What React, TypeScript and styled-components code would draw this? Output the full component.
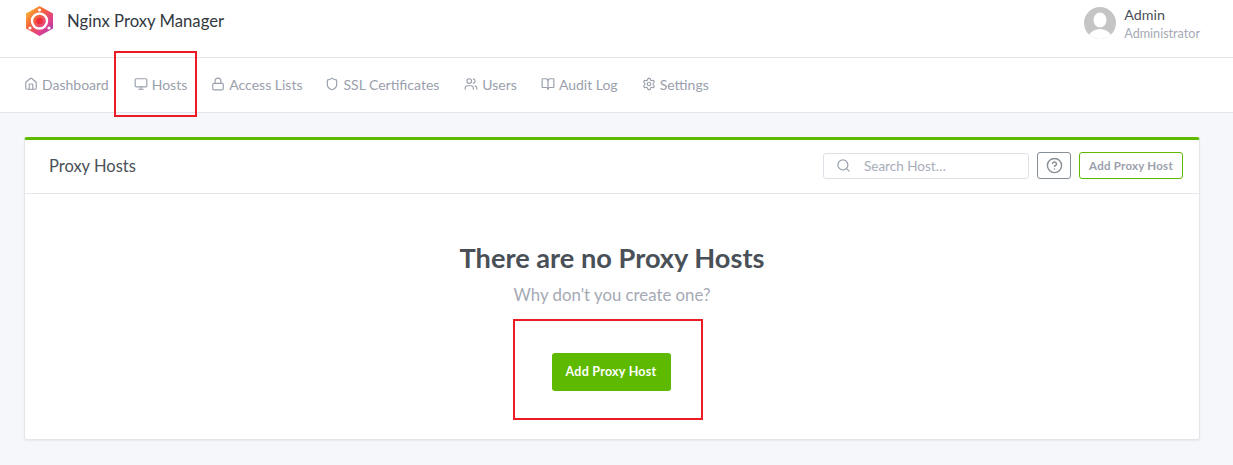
import React from 'react'
import styled, { createGlobalStyle } from 'styled-components'
import { Home, Monitor, Lock, Shield, Users, BookOpen, Settings, Search, HelpCircle } from 'lucide-react'

const GlobalStyle = createGlobalStyle`
  html, body {
    margin: 0;
    padding: 0;
    background: #f5f7fb;
    font-family: "Lato", "Liberation Sans", sans-serif;
    color: #495057;
  }
  * { box-sizing: border-box; }
`

const Page = styled.div`
  position: relative;
  width: 1233px;
  height: 465px;
  overflow: hidden;
`

const Header = styled.header`
  height: 58px;
  background: #fff;
  border-bottom: 1px solid #e4e6ec;
  display: flex;
  align-items: center;
  justify-content: space-between;
  padding: 0 33px 15px 24px;
`

const Brand = styled.div`
  display: flex;
  align-items: center;
  gap: 13px;
  font-size: 16.7px;
  color: #333a42;
`

const UserBox = styled.div`
  display: flex;
  align-self: flex-start;
  align-items: flex-start;
  gap: 8px;
  padding-top: 7px;
`

const UserText = styled.div`
  display: flex;
  flex-direction: column;
  gap: 3px;
`

const UserName = styled.div`
  font-size: 14.3px;
  line-height: 16px;
  color: #495057;
`

const UserRole = styled.div`
  font-size: 12.6px;
  line-height: 16px;
  color: #a5a9b4;
`

const Nav = styled.nav`
  height: 55px;
  background: #fff;
  border-bottom: 1px solid #e0e4ec;
  display: flex;
  align-items: center;
  padding: 0 0 2px 24px;
`

const NavItem = styled.a<{ $gap: number }>`
  display: flex;
  align-items: center;
  gap: 4px;
  margin-right: ${(p) => p.$gap}px;
  font-size: 14px;
  color: #9aa0ac;
  svg {
    width: 14px;
    height: 14px;
    stroke-width: 2;
  }
`

const Main = styled.main`
  padding: 24px 33px 0 24px;
`

const Card = styled.section`
  height: 303px;
  background: #fff;
  border: 1px solid #e4e6ec;
  border-top: 3px solid #5eba00;
  border-radius: 3px;
  box-shadow: 0 1px 2px rgba(0, 0, 0, 0.06);
`

const CardHeader = styled.div`
  height: 54px;
  border-bottom: 1px solid #e4e6ec;
  display: flex;
  align-items: center;
  padding: 0 16px 2px 24px;
`

const CardTitle = styled.h3`
  margin: 0;
  flex: 1;
  font-size: 16.5px;
  font-weight: 400;
  color: #495057;
`

const SearchBox = styled.div`
  width: 206px;
  height: 26px;
  border: 1px solid #dde1e8;
  border-radius: 3px;
  display: flex;
  align-items: center;
  gap: 13px;
  padding-left: 12px;
  font-size: 13.5px;
  color: #a8adb8;
  svg {
    width: 15px;
    height: 15px;
    color: #9aa0ac;
  }
`

const HelpButton = styled.div`
  width: 34px;
  height: 27px;
  margin-left: 8px;
  border: 1px solid #868e96;
  border-radius: 3px;
  display: flex;
  align-items: center;
  justify-content: center;
  svg {
    width: 17px;
    height: 17px;
    color: #868e96;
    stroke-width: 2;
  }
`

const OutlineButton = styled.div`
  width: 104px;
  height: 27px;
  margin-left: 8px;
  border: 1px solid #5eba00;
  border-radius: 3px;
  display: flex;
  align-items: center;
  justify-content: center;
  font-size: 11.5px;
  font-weight: 700;
  letter-spacing: 0.25px;
  color: #9aa0ac;
`

const Empty = styled.div`
  display: flex;
  flex-direction: column;
  align-items: center;
  padding-top: 46px;
`

const EmptyTitle = styled.h1`
  margin: 0;
  font-size: 27.2px;
  line-height: 36px;
  font-weight: 700;
  color: #495057;
`

const EmptyText = styled.div`
  margin-top: 8px;
  font-size: 16.8px;
  line-height: 22px;
  color: #a5a9b4;
`

const PrimaryButton = styled.div`
  width: 119px;
  height: 38px;
  margin-top: 47px;
  margin-right: 2px;
  background: #5eba00;
  border-radius: 3px;
  display: flex;
  align-items: center;
  justify-content: center;
  font-size: 12.5px;
  font-weight: 700;
  letter-spacing: 0.25px;
  padding-bottom: 1px;
  color: #fff;
`

const Avatar = () => (
  <svg width="32" height="32" viewBox="0 0 32 32">
    <defs>
      <clipPath id="avatar-clip">
        <circle cx="16" cy="16" r="16" />
      </clipPath>
    </defs>
    <circle cx="16" cy="16" r="16" fill="#c5c5c5" />
    <g clipPath="url(#avatar-clip)" fill="#fff">
      <ellipse cx="16" cy="13" rx="6.5" ry="7.5" />
      <ellipse cx="16" cy="32" rx="12" ry="10" />
    </g>
  </svg>
)

const Logo = () => (
  <svg width="30" height="38" viewBox="0 0 30 38">
    <defs>
      <linearGradient id="logo-grad" x1="0" y1="0" x2="1" y2="1">
        <stop offset="0" stopColor="#f9cf2f" />
        <stop offset="0.4" stopColor="#f4603c" />
        <stop offset="0.7" stopColor="#e0408c" />
        <stop offset="1" stopColor="#8d3fc0" />
      </linearGradient>
    </defs>
    <polygon points="15.5,4 29,11.5 29,26.5 15.5,34 2,26.5 2,11.5" fill="url(#logo-grad)" />
    <circle cx="15.5" cy="19" r="7.5" fill="none" stroke="#fff" strokeWidth="2.4" />
    <circle cx="15.5" cy="19" r="3.2" fill="#ee2d3d" />
    <circle cx="15.5" cy="8" r="1.6" fill="#fff" />
    <circle cx="6" cy="26" r="1.6" fill="#fff" />
    <circle cx="25" cy="26" r="1.6" fill="#fff" />
  </svg>
)

const Highlight = styled.div<{ $left: number; $top: number; $width: number; $height: number }>`
  position: absolute;
  left: ${(p) => p.$left}px;
  top: ${(p) => p.$top}px;
  width: ${(p) => p.$width}px;
  height: ${(p) => p.$height}px;
  border: 2px solid #ed1c24;
`

const navItems = [
  { label: 'Dashboard', icon: <Home />, gap: 25 },
  { label: 'Hosts', icon: <Monitor />, gap: 24 },
  { label: 'Access Lists', icon: <Lock />, gap: 23 },
  { label: 'SSL Certificates', icon: <Shield />, gap: 25 },
  { label: 'Users', icon: <Users />, gap: 24 },
  { label: 'Audit Log', icon: <BookOpen />, gap: 24 },
  { label: 'Settings', icon: <Settings />, gap: 0 },
]

const App = () => {
  return (
    <Page>
      <GlobalStyle />
      <Header>
        <Brand>
          <Logo />
          Nginx Proxy Manager
        </Brand>
        <UserBox>
          <Avatar />
          <UserText>
            <UserName>Admin</UserName>
            <UserRole>Administrator</UserRole>
          </UserText>
        </UserBox>
      </Header>
      <Nav>
        {navItems.map((item) => (
          <NavItem key={item.label} $gap={item.gap}>
            {item.icon}
            {item.label}
          </NavItem>
        ))}
      </Nav>
      <Main>
        <Card>
          <CardHeader>
            <CardTitle>Proxy Hosts</CardTitle>
            <SearchBox>
              <Search />
              Search Host…
            </SearchBox>
            <HelpButton>
              <HelpCircle />
            </HelpButton>
            <OutlineButton>Add Proxy Host</OutlineButton>
          </CardHeader>
          <Empty>
            <EmptyTitle>There are no Proxy Hosts</EmptyTitle>
            <EmptyText>Why don't you create one?</EmptyText>
            <PrimaryButton>Add Proxy Host</PrimaryButton>
          </Empty>
        </Card>
      </Main>
      <Highlight $left={114} $top={51} $width={83} $height={66} />
      <Highlight $left={513} $top={319} $width={190} $height={101} />
    </Page>
  )
}

export default App
